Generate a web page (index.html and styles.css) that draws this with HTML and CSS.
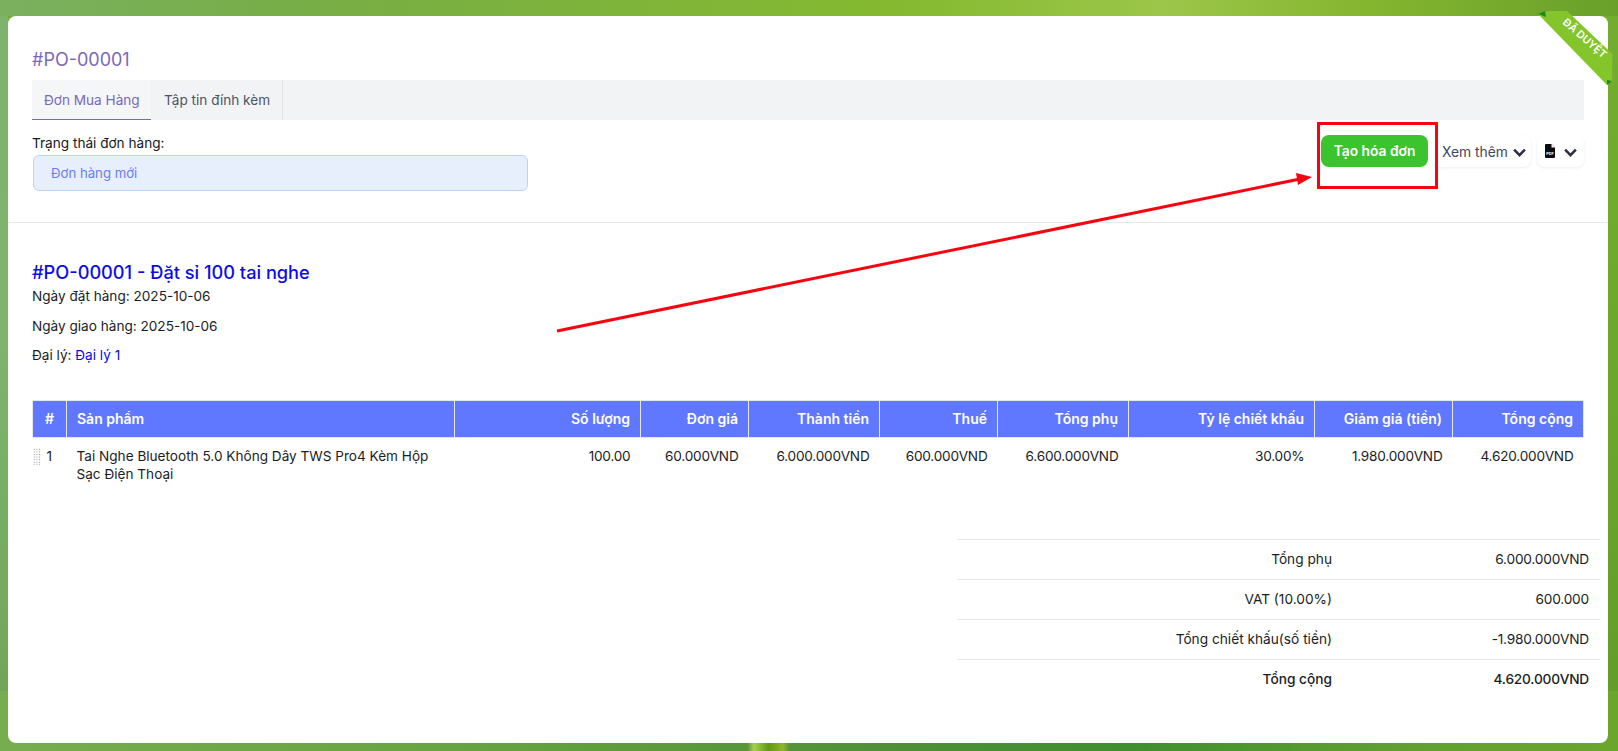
FILE: index.html
```html
<!DOCTYPE html>
<html lang="vi">
<head>
<meta charset="utf-8">
<title>#PO-00001</title>
<link rel="stylesheet" href="styles.css">
</head>
<body>
<main class="card">
  <svg class="ribbon" width="73" height="90" viewBox="0 0 73 90">
    <polygon points="-2,14 8,11 27,11 72.5,54 72,81 67,85" fill="#84c52c"/>
    <polygon points="-2,14 5,11 6,17" fill="#1f8a1f"/>
    <polygon points="67,80 72,81 67,85" fill="#1f8a1f"/>
    <text class="ribbon-text" x="45" y="42" transform="rotate(41 45 38)" text-anchor="middle">ĐÃ DUYỆT</text>
  </svg>

  <section class="top">
    <h1 class="po-title">#PO-00001</h1>
    <nav class="tabs">
      <a class="tab active">Đơn Mua Hàng</a>
      <a class="tab second">Tập tin đính kèm</a>
    </nav>
    <div class="status-row">
      <div class="status">
        <div class="status-label">Trạng thái đơn hàng:</div>
        <div class="status-box">Đơn hàng mới</div>
      </div>
      <div class="actions">
        <button class="btn-green">Tạo hóa đơn</button>
        <button class="btn-light more"><span class="more-text">Xem thêm</span>
          <svg class="chev" width="15" height="15" viewBox="0 0 14 14"><path d="M2 4.4 7 9.4l5-5" fill="none" stroke="#2b3048" stroke-width="2.4"/></svg>
        </button>
        <button class="btn-light pdf">
          <svg width="10" height="14" viewBox="0 0 10 14"><path d="M1 0h5.5L10 3.5V13a1 1 0 0 1-1 1H1a1 1 0 0 1-1-1V1a1 1 0 0 1 1-1z" fill="#0b0b12"/><path d="M6.5 0v3.5H10z" fill="#fff"/><text x="5" y="10.5" class="pdf-text" text-anchor="middle">PDF</text></svg>
          <svg class="chev" width="15" height="15" viewBox="0 0 14 14"><path d="M2 4.4 7 9.4l5-5" fill="none" stroke="#2b3048" stroke-width="2.4"/></svg>
        </button>
      </div>
    </div>
  </section>

  <section class="details">
    <h2 class="doc-title">#PO-00001 - Đặt sỉ 100 tai nghe</h2>
    <p class="meta">Ngày đặt hàng: 2025-10-06</p>
    <p class="meta">Ngày giao hàng: 2025-10-06</p>
    <p class="meta">Đại lý: <a class="link">Đại lý 1</a></p>

    <table class="items">
      <colgroup>
        <col class="c1"><col class="c2"><col class="c3"><col class="c4"><col class="c5">
        <col class="c6"><col class="c7"><col class="c8"><col class="c9"><col class="c10">
      </colgroup>
      <thead>
        <tr>
          <th class="center">#</th>
          <th class="left">Sản phẩm</th>
          <th>Số lượng</th>
          <th>Đơn giá</th>
          <th>Thành tiền</th>
          <th>Thuế</th>
          <th>Tổng phụ</th>
          <th>Tỷ lệ chiết khấu</th>
          <th>Giảm giá (tiền)</th>
          <th>Tổng cộng</th>
        </tr>
      </thead>
      <tbody>
        <tr>
          <td class="idx"><span class="grip"></span>1</td>
          <td class="left name">Tai Nghe Bluetooth 5.0 Không Dây TWS Pro4 Kèm Hộp Sạc Điện Thoại</td>
          <td class="num">100.00</td>
          <td class="num">60.000VND</td>
          <td class="num">6.000.000VND</td>
          <td class="num">600.000VND</td>
          <td class="num">6.600.000VND</td>
          <td class="num">30.00%</td>
          <td class="num">1.980.000VND</td>
          <td class="num">4.620.000VND</td>
        </tr>
      </tbody>
    </table>

    <div class="summary-wrap">
      <div class="summary">
        <div class="sum-row"><span class="sum-label">Tổng phụ</span><span class="sum-value">6.000.000VND</span></div>
        <div class="sum-row"><span class="sum-label">VAT (10.00%)</span><span class="sum-value">600.000</span></div>
        <div class="sum-row"><span class="sum-label">Tổng chiết khấu(số tiền)</span><span class="sum-value">-1.980.000VND</span></div>
        <div class="sum-row total"><span class="sum-label">Tổng cộng</span><span class="sum-value">4.620.000VND</span></div>
      </div>
    </div>
  </section>

  <div class="red-box"></div>
  <svg class="arrow" width="760" height="170" viewBox="0 0 760 170">
    <line x1="2" y1="167" x2="745" y2="15" stroke="#f4050f" stroke-width="3"/>
    <polygon points="757,13 741,9 743,21" fill="#f4050f"/>
  </svg>
</main>
</body>
</html>
```
FILE: styles.css
```css
* { box-sizing: border-box; }
html, body { height: 100%; }
body {
  margin: 0;
  overflow: hidden;
  font-family: Inter, "Liberation Sans", sans-serif;
  font-size: 13.6px;
  color: #1f2430;
  padding: 16px 10px 8px 8px;
  background:
    linear-gradient(90deg, transparent 46.2%, #a8cf4a 46.6%, #5f9a12 47.5%, #8fb52e 48.4%, transparent 48.8%) bottom / 100% 8px no-repeat,
    linear-gradient(90deg, #76ad4e 0%, #66a33e 30%, #4f8f36 55%, #3f8f2e 70%, #5f9e30 85%, #6ba62c 100%) bottom / 100% 60px no-repeat,
    linear-gradient(90deg, #7ab05f 0%, #78ae45 20%, #84b930 55%, #9cc649 72%, #84b52f 85%, #68a02a 100%) top / 100% 16px no-repeat,
    linear-gradient(180deg, #7db36c 0%, #7fb46f 45%, #6ea356 100%) left / 8px 100% no-repeat,
    linear-gradient(180deg, #74ad30 0%, #6aa62c 60%, #5f9b28 100%);
}
.card {
  position: relative;
  height: 727px;
  background: #fff;
  border-radius: 8px;
}
.ribbon {
  position: absolute;
  top: -16px;
  right: -5px;
  overflow: visible;
}
.ribbon-text {
  font-size: 10.5px;
  font-weight: 600;
  fill: #fff;
}
.top {
  padding: 33px 24px 0;
  height: 207px;
  border-bottom: 1px solid #e5e7eb;
}
.po-title {
  margin: 0;
  font-size: 18px;
  line-height: 22px;
  font-weight: 400;
  color: #7a68b8;
}
.tabs {
  display: flex;
  margin-top: 9px;
  height: 40px;
  background: #f2f3f5;
}
.tab {
  display: flex;
  align-items: center;
  padding: 0 12px;
  color: #4b5563;
  font-size: 13.6px;
  white-space: nowrap;
}
.tab.active {
  width: 119px;
  color: #7a68b8;
  background: #f5f6f8;
  border-bottom: 1px solid #7a68b8;
}
.tab.second {
  width: 132px;
  padding-left: 13px;
  border-right: 1px solid #e3e5e9;
}
.status-row {
  display: flex;
  justify-content: space-between;
  align-items: flex-start;
}
.status { width: 496px; }
.status-label {
  margin-top: 15px;
  line-height: 17px;
  color: #14171f;
}
.status-box {
  display: flex;
  align-items: center;
  height: 36px;
  margin: 3px 0 0 1px;
  padding-left: 17px;
  background: #e7effd;
  border: 1px solid #b5d5f7;
  border-radius: 6px;
  color: #6b7cf7;
  font-size: 13.2px;
}
.actions {
  display: flex;
  align-items: flex-start;
  margin-top: 15px;
}
button {
  font-family: inherit;
  border: 0;
  cursor: pointer;
}
.btn-green {
  width: 107px;
  height: 32px;
  background: #3cc42f;
  color: #fff;
  border-radius: 8px;
  font-size: 13.8px;
  font-weight: 600;
}
.btn-light {
  display: flex;
  align-items: center;
  height: 32px;
  background: #fff;
  border-radius: 8px;
  box-shadow: 0 1px 3px rgba(30, 40, 70, 0.08);
  color: #3f4560;
  font-size: 13.8px;
  padding: 0;
}
.more-text { padding-top: 2px; }
.chev { margin-top: 2px; }
.btn-light.more { width: 99px; gap: 4px; margin-left: 4px; padding-left: 10px; }
.btn-light.pdf { width: 47px; gap: 8px; margin-left: 6px; padding-left: 8px; }
.pdf-text { font-size: 3.8px; font-weight: 700; fill: #fff; }
.details { padding: 0 24px; }
.doc-title {
  margin: 38px 0 0;
  font-size: 18.2px;
  line-height: 22px;
  font-weight: 500;
  color: #0a0af0;
}
.meta {
  margin: 0 0 12px;
  line-height: 17.5px;
  font-size: 13.6px;
  color: #1a1d26;
}
.doc-title + .meta { margin-top: 5px; }
.link { color: #0a0af0; }
.items {
  width: 1552px;
  margin-top: 35px;
  border-collapse: collapse;
  table-layout: fixed;
}
.c1 { width: 34px; }
.c2 { width: 388px; }
.c3 { width: 186px; }
.c4 { width: 108px; }
.c5 { width: 131px; }
.c6 { width: 118px; }
.c7 { width: 131px; }
.c8 { width: 186px; }
.c9 { width: 138px; }
.c10 { width: 131px; }
.items th {
  height: 37px;
  padding: 0 10px;
  background: #5f78ff;
  color: #fff;
  font-size: 14px;
  font-weight: 600;
  text-align: right;
  border: 1px solid #e5e7eb;
}
.items th.center { text-align: center; }
.items th.left, .items td.left { text-align: left; }
.items td {
  padding: 9px 10px 0;
  vertical-align: top;
  text-align: right;
  line-height: 18.5px;
  color: #1a1d26;
  font-size: 13.6px;
}
.items td.num { letter-spacing: -0.2px; }
.items td.idx {
  text-align: left;
  padding-left: 14px;
}
.items td.name { padding-right: 20px; }
.grip {
  position: absolute;
  left: 25px;
  width: 8px;
  height: 17px;
  margin-top: 1px;
  background: radial-gradient(circle, #9a9a9a 0.6px, transparent 0.9px) 0 0 / 2.6px 2.6px;
}
.summary-wrap {
  display: flex;
  justify-content: flex-end;
  margin: 55px -16px 0 0;
}
.summary { width: 643px; }
.sum-row {
  display: flex;
  align-items: center;
  height: 40px;
  border-top: 1px solid #e5e7eb;
  font-size: 13.7px;
  color: #1a1d26;
}
.sum-label {
  width: 375px;
  text-align: right;
}
.sum-value {
  width: 257px;
  text-align: right;
  letter-spacing: -0.2px;
}
.total { font-weight: 450; }
.red-box {
  position: absolute;
  left: 1309px;
  top: 106px;
  width: 121px;
  height: 67px;
  border: 3px solid #f4050f;
}
.arrow {
  position: absolute;
  left: 547px;
  top: 148px;
  overflow: visible;
}
```
